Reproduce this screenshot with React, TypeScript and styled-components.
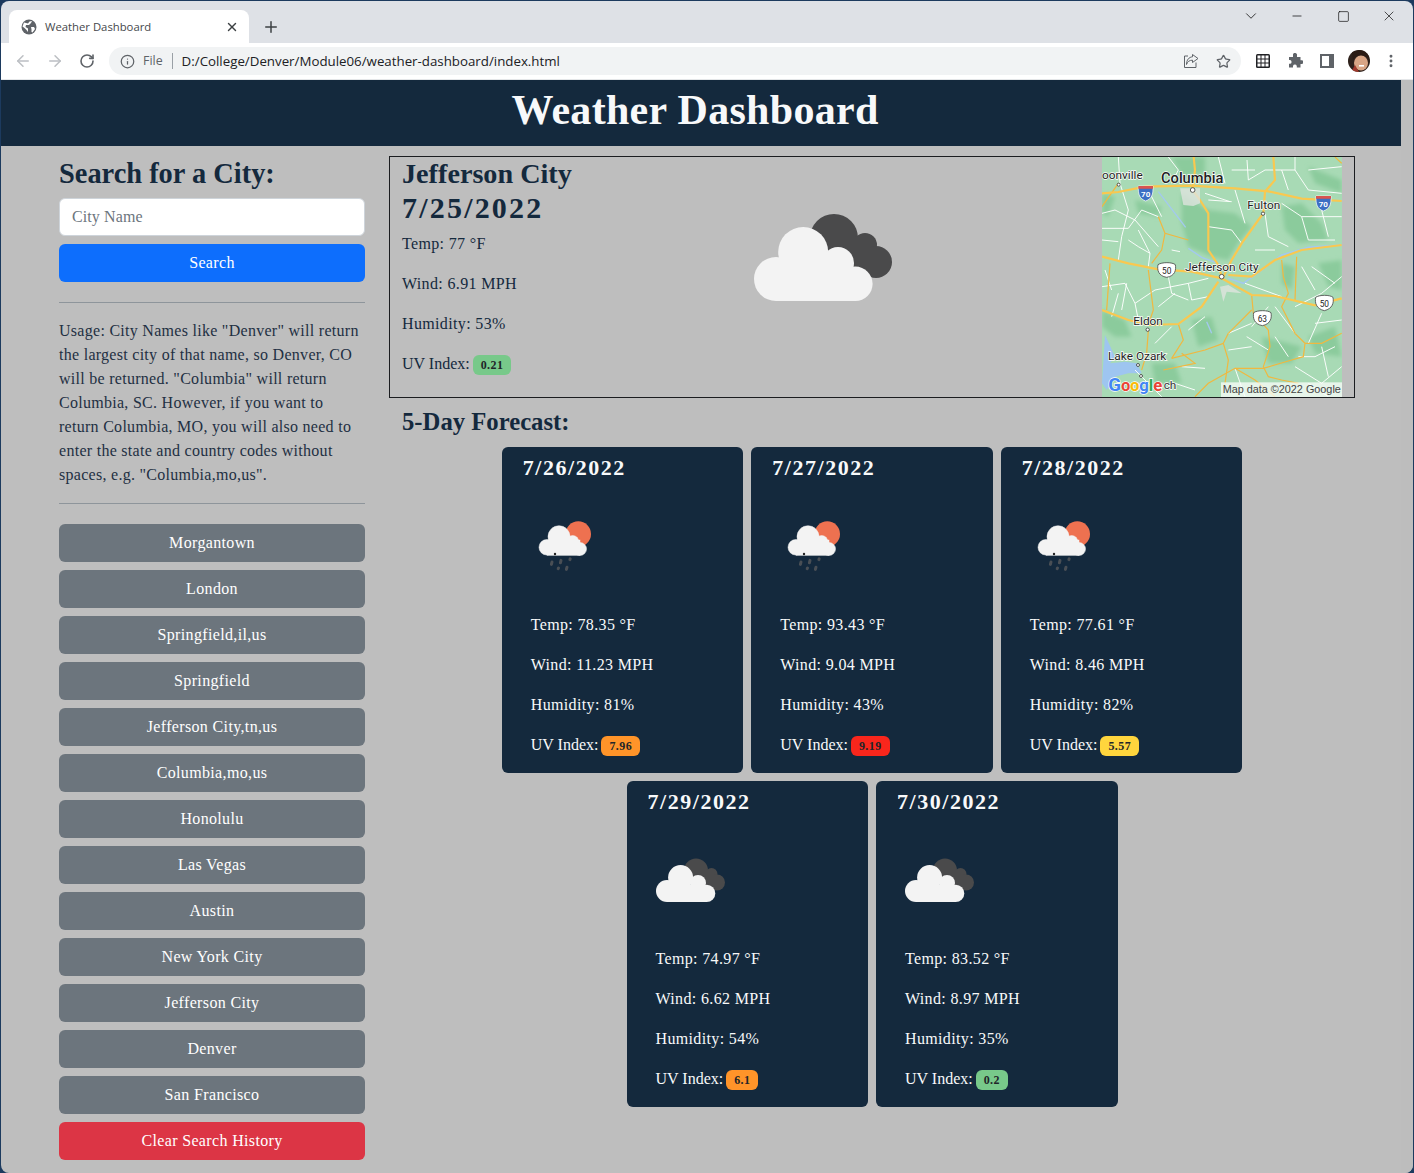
import styled, { createGlobalStyle } from "styled-components";
import { ArrowLeft, ArrowRight, ChevronDown, Info, Minus, MoreVertical, Plus, RotateCw, Square, Star, X } from "lucide-react";

const GlobalStyle = createGlobalStyle`
    html, body {
        margin: 0;
        padding: 0;
        background: #1c3a5e;
    }
    * {
        box-sizing: border-box;
    }
`

const navy = "#14293d";
const serif = "'Liberation Serif', 'Times New Roman', serif";

const Window = styled.div`
    width: 1414px;
    height: 1173px;
    padding: 1px 1px 0;
    display: flex;
    flex-direction: column;
    overflow: hidden;
`

const TabStrip = styled.div`
    height: 42px;
    flex: none;
    display: flex;
    align-items: flex-end;
    padding-left: 8px;
    background: #dee1e6;
    border-radius: 8px 8px 0 0;
`

const Tab = styled.div`
    width: 240px;
    height: 33px;
    display: flex;
    align-items: center;
    padding: 0 10px 0 12px;
    background: #fff;
    border-radius: 8px 8px 0 0;
    color: #45484c;
    font: 11.3px 'Open Sans', sans-serif;
`

const TabTitle = styled.span`
    flex: 1;
    margin-left: 8px;
`

const NewTab = styled.div`
    width: 44px;
    height: 33px;
    display: flex;
    align-items: center;
    justify-content: center;
    color: #3c4043;
`

const WindowControls = styled.div`
    margin-left: auto;
    align-self: flex-start;
    display: flex;
    color: #000;
`

const WindowButton = styled.div<{ $width: number }>`
    width: ${props => props.$width}px;
    height: 30px;
    display: flex;
    align-items: center;
    justify-content: center;
`

const Toolbar = styled.div`
    height: 37px;
    flex: none;
    display: flex;
    align-items: center;
    padding: 0 6px;
    background: #fff;
    border-bottom: 1px solid #e4e6e8;
`

const ToolButton = styled.div<{ $colour?: string }>`
    width: 32px;
    height: 32px;
    flex: none;
    display: flex;
    align-items: center;
    justify-content: center;
    color: ${props => props.$colour || "#5f6368"};
`

const Omnibox = styled.div`
    flex: 1;
    height: 28px;
    margin: 0 6px;
    display: flex;
    align-items: center;
    padding: 0 2px 0 11px;
    background: #f1f3f4;
    border-radius: 14px;
    font: 13px 'Open Sans', sans-serif;
    color: #202124;
`

const FileLabel = styled.span`
    margin-left: 8px;
    padding-right: 9px;
    border-right: 1px solid #9aa0a6;
    color: #5f6368;
    font-size: 12.4px;
    line-height: 16px;
`

const Url = styled.span`
    flex: 1;
    margin-left: 9px;
    font-size: 13.3px;
`

const Viewport = styled.div`
    flex: 1;
    min-height: 0;
    display: flex;
    background: #bebebe;
    border-radius: 0 0 8px 8px;
    overflow: hidden;
`

const Page = styled.div`
    width: 1400px;
    flex: none;
    font-family: ${serif};
    color: ${navy};
`

const Scrollbar = styled.div`
    flex: 1;
    background: #bdbdbd;
`

const Header = styled.header`
    height: 66px;
    display: flex;
    align-items: center;
    justify-content: center;
    background: ${navy};
    color: #f8f9fa;
    font-size: 42px;
    font-weight: 700;
    letter-spacing: 0.3px;
    padding-bottom: 7px;
    padding-right: 12px;
`

const Columns = styled.div`
    display: flex;
    padding: 10px 0 0 58px;
    gap: 24px;
`

const Sidebar = styled.aside`
    width: 306px;
    flex: none;
    padding-top: 1px;
`

const SideTitle = styled.h2`
    margin: 0 0 7px;
    font-size: 28.4px;
    line-height: 34px;
    font-weight: 700;
`

const CityInput = styled.input`
    width: 100%;
    height: 38px;
    display: block;
    padding: 0 12px;
    border: 1px solid #ced4da;
    border-radius: 6px;
    background: #fff;
    font-family: ${serif};
    font-size: 16px;
    letter-spacing: 0.1px;
    &::placeholder {
        color: #6c757d;
        opacity: 1;
    }
`

const Button = styled.button<{ $bg: string }>`
    width: 100%;
    height: 38px;
    display: block;
    margin-top: 8px;
    border: 0;
    border-radius: 6px;
    background: ${props => props.$bg};
    color: #fff;
    font-family: ${serif};
    font-size: 16px;
    letter-spacing: 0.35px;
`

const Rule = styled.hr<{ $before: number; $after: number }>`
    margin: ${props => props.$before}px 0 ${props => props.$after}px;
    border: 0;
    border-top: 1px solid #8e959b;
`

const Usage = styled.p`
    margin: 0;
    font-size: 16px;
    line-height: 24px;
    letter-spacing: 0.28px;
    color: #1e3043;
`

const Main = styled.main`
    width: 966px;
    flex: none;
`

const Today = styled.section`
    height: 242px;
    display: flex;
    justify-content: space-between;
    padding: 0 12px;
    border: 1px solid #1b1d20;
`

const Summary = styled.div`
    width: 172px;
`

const BigTitle = styled.h2`
    margin: 0;
    font-size: 28.2px;
    line-height: 34px;
    font-weight: 700;
    white-space: nowrap;
`

const BigDate = styled(BigTitle)`
    margin-bottom: 7px;
    font-size: 30px;
    letter-spacing: 2.2px;
`

const Stat = styled.p`
    margin: 0 0 16px;
    height: 24px;
    font-size: 16px;
    line-height: 24px;
    letter-spacing: 0.35px;
    white-space: nowrap;
`

const UvLabel = styled.span`
    letter-spacing: 0;
`

const Badge = styled.span<{ $bg: string }>`
    display: inline-block;
    height: 20px;
    margin-left: 3px;
    padding: 0 8px;
    border-radius: 6px;
    background: ${props => props.$bg};
    color: #212529;
    font: 700 12px/20px ${serif};
    letter-spacing: 0.4px;
`

const MapFrame = styled.svg`
    width: 240px;
    height: 240px;
    display: block;
`

const ForecastTitle = styled.h3`
    margin: 9px 0 11px 13px;
    font-size: 24.7px;
    line-height: 29px;
    font-weight: 700;
`

const Cards = styled.div`
    display: flex;
    flex-wrap: wrap;
    justify-content: center;
    gap: 8px;
`

const Card = styled.article`
    width: 241.5px;
    height: 326px;
    padding-top: 8px;
    border-radius: 6px;
    background: ${navy};
    color: #f8f9fa;
`

const CardDate = styled.h4`
    margin: 0 0 16px 21px;
    font-size: 22px;
    line-height: 25px;
    font-weight: 700;
    letter-spacing: 1.55px;
`

const CardIcon = styled.div`
    margin-left: 21px;
    height: 100px;
`

const CardStats = styled.div`
    margin: 17px 0 0 29px;
`

const CloudIcon = ({ size }: { size: number }) => (
    <svg width={size} height={size} viewBox="0 0 100 100">
        <g fill="#4a4a4b">
            <circle cx="48" cy="40.5" r="12" />
            <circle cx="63.5" cy="44" r="6" />
            <circle cx="69" cy="52.5" r="8" />
            <rect x="44" y="40" width="22" height="20" />
        </g>
        <g fill="#f3f3f3">
            <circle cx="32.6" cy="47.5" r="12.5" />
            <circle cx="19" cy="61" r="11" />
            <circle cx="58.7" cy="63.4" r="8.6" />
            <circle cx="50" cy="53" r="8" />
            <rect x="19" y="55" width="40" height="17" />
        </g>
    </svg>
)

const RainIcon = ({ size }: { size: number }) => (
    <svg width={size} height={size} viewBox="0 0 100 100">
        <circle cx="55.3" cy="38" r="12.7" fill="#ee7150" />
        <g fill="#f3f3f3" stroke="#f3f3f3" strokeWidth="0.5">
            <circle cx="36" cy="40.7" r="11" />
            <circle cx="23.7" cy="51.3" r="7.7" />
            <circle cx="57" cy="53" r="6.5" />
            <circle cx="49.7" cy="45.5" r="6" />
            <rect x="24" y="44" width="33" height="15.3" />
        </g>
        <circle cx="32" cy="58" r="1.2" fill="#222" />
        <g stroke="#4a4f55" strokeWidth="3" strokeLinecap="round">
            <line x1="29" y1="66" x2="28.4" y2="68.4" />
            <line x1="38" y1="64.4" x2="37.4" y2="66.8" />
            <line x1="47.2" y1="62.8" x2="46.9" y2="63.6" />
            <line x1="35.5" y1="72" x2="35.2" y2="72.6" />
            <line x1="44" y1="71.2" x2="43.4" y2="73.4" />
        </g>
    </svg>
)

// coordinates here are the 3x crop of the map tile, hence the odd viewBox
const orangeMajor = [
    "M21 130L70 126L150 110L290 107L420 115L520 124L620 146L740 153",
    "M293 120L315 150L340 190L340 300L370 345L380 380",
    "M505 190L490 210L440 280L410 330L385 380",
    "M21 320L100 340L190 358L290 365L380 385L470 435L540 438L660 466L740 445",
    "M370 395L320 470L250 522L160 525L100 510L21 480",
    "M400 375L470 380L540 330L620 300L740 285",
    "M535 21L540 90L510 125L505 190",
    "M296 21L300 60L293 120",
];

const orangeMinor = [
    "M470 435L475 490L520 540L525 590L505 650L520 680L560 690L610 700",
    "M560 330L565 380L580 430L560 470L600 550L630 580L625 620L590 630L505 655L420 655L340 700L300 740",
    "M630 580L680 580L740 550",
    "M210 250L200 300L170 340",
    "M190 200L210 250L280 270",
    "M400 550L470 480",
    "M400 550L385 580L400 630L390 700",
    "M385 580L330 600L230 625",
    "M160 540L155 610L140 660",
    "M70 100L21 170",
    "M605 320L600 450",
    "M45 340L35 480",
    "M160 360L175 480L160 525",
    "M250 522L265 570L230 625",
    "M205 660L300 640L260 610",
    "M420 655L480 690L540 740",
    "M720 21L740 40",
];

const whiteRoads = [
    "M70 21L75 100L100 180L80 260L70 330",
    "M21 235L100 235L140 180L190 200",
    "M130 240L165 310L160 350",
    "M21 410L90 400L120 460L180 420L280 400L340 385",
    "M70 430L50 500",
    "M280 400L290 450L340 440",
    "M190 470L240 430",
    "M230 300L255 305",
    "M340 150L410 155",
    "M340 230L410 240L440 280",
    "M456 30L460 90L510 60L600 60L640 120",
    "M600 21L600 60",
    "M640 60L740 50",
    "M510 190L520 260L580 290",
    "M560 160L620 200L640 270L720 270",
    "M620 200L740 200",
    "M640 120L740 130",
    "M450 400L560 440",
    "M600 470L680 430L740 380",
    "M650 350L720 400",
    "M680 490L640 580",
    "M660 520L740 510",
    "M470 520L400 550",
    "M455 560L520 600",
    "M540 470L600 550",
    "M260 650L330 655",
    "M180 580L230 530",
    "M420 655L450 740",
    "M600 650L680 700L740 650",
    "M680 590L700 680",
    "M220 21L250 60L230 100",
    "M330 130L405 155",
    "M120 660L200 740",
    "M370 21L390 100",
    "M21 190L60 180L120 210L190 290",
    "M100 270L130 290L165 310",
    "M21 270L70 275",
    "M30 360L50 420",
    "M95 400L80 480",
    "M120 460L130 510",
    "M220 380L230 430L280 450",
    "M160 120L200 200",
    "M410 60L480 60",
    "M420 120L450 220",
    "M560 60L580 120",
    "M680 180L700 260",
    "M620 350L660 420",
    "M480 300L540 300",
    "M520 470L470 530",
    "M540 560L580 620",
    "M400 600L470 590",
    "M610 620L660 620L720 590",
    "M640 700L700 740",
    "M280 540L330 500",
    "M240 700L300 720",
];

const darkPatches = [
    "M260 130L340 180L420 190L470 230L430 280L400 330L350 320L280 290L260 220Z",
    "M560 170L620 160L680 220L700 270L610 280L570 240Z",
    "M21 480L90 510L110 560L60 560L21 530Z",
    "M230 21L330 21L330 70L260 80Z",
    "M500 560L620 590L590 640L520 640Z",
    "M120 150L200 170L190 200L130 190Z",
    "M640 50L740 90L740 130L660 100Z",
    "M670 340L740 330L740 420L700 410Z",
    "M290 510L350 500L370 570L310 590Z",
    "M170 640L240 640L260 700L180 700Z",
    "M560 340L600 350L590 420L560 400Z",
    "M640 560L720 530L740 620L660 610Z",
    "M21 130L60 140L40 200L21 190Z",
];

const MapDrawing = () => (
    <MapFrame viewBox="21 21 720 720" fontFamily="Roboto, sans-serif">
        <defs>
            <filter id="soft-patch"><feGaussianBlur stdDeviation="7" /></filter>
        </defs>
        <rect x="21" y="21" width="720" height="720" fill="#a8dab5" />
        <g filter="url(#soft-patch)">
            {darkPatches.map(d => <path key={d} d={d} fill="#8bcb9c" />)}
        </g>
        <g fill="none" stroke="#a3c9ef" strokeWidth="4">
            <path d="M190 125L240 190L272 232" />
            <path d="M280 295L320 322L370 340" />
            <path d="M400 385L445 400L500 360L560 315L640 292L740 285" strokeWidth="5" />
            <path d="M335 515L350 550" />
        </g>
        <path d="M30 555L60 620L45 640L90 635L125 640L140 670L100 670L60 680L35 720L21 700Z" fill="#9ec5f0" />
        <g fill="none" stroke="#fff" strokeWidth="2.8">
            {whiteRoads.map(d => <path key={d} d={d} />)}
        </g>
        <g fill="none" stroke="#f0b840" strokeWidth="3.6">
            {orangeMinor.map(d => <path key={d} d={d} />)}
        </g>
        <g fill="none" stroke="#f9c850" strokeWidth="6.5">
            {orangeMajor.map(d => <path key={d} d={d} />)}
        </g>
        <path d="M255 115H315V160L295 168L265 165Z M375 410L385 455L395 425L440 430L400 405Z" fill="#dfe3df" opacity="0.8" />
        <g fill="#fff" stroke="#333" strokeWidth="2.4">
            <circle cx="71" cy="104" r="4.5" />
            <circle cx="293" cy="120" r="7" />
            <circle cx="504" cy="191" r="5" />
            <circle cx="380" cy="380" r="7" />
            <circle cx="158" cy="539" r="5" />
            <circle cx="129" cy="645" r="4.5" />
            <circle cx="138" cy="678" r="4.5" />
        </g>
        <g stroke="#fff" strokeWidth="4" paintOrder="stroke" fill="#222" fontSize="35.5">
            <text x="21" y="88">oonville</text>
            <text x="198" y="98" fontSize="44" fontWeight="500">Columbia</text>
            <text x="457" y="178">Fulton</text>
            <text x="270" y="363">Jefferson City</text>
            <text x="115" y="525">Eldon</text>
            <text x="39" y="630">Lake Ozark</text>
            <text x="206" y="717" fill="#333">ch</text>
        </g>
        <g>
            <path d="M130 108H174C175 135 170 146 152 153C134 146 129 135 130 108Z" fill="#3c6fc4" stroke="#fff" strokeWidth="2" />
            <path d="M130 108H174V116H130Z" fill="#d9534f" />
            <text x="152" y="141" fill="#fff" fontSize="24" fontWeight="700" textAnchor="middle">70</text>
            <path d="M663 138H708C709 165 704 176 685 183C667 176 662 165 663 138Z" fill="#3c6fc4" stroke="#fff" strokeWidth="2" />
            <path d="M663 138H708V146H663Z" fill="#d9534f" />
            <text x="685" y="171" fill="#fff" fontSize="24" fontWeight="700" textAnchor="middle">70</text>
        </g>
        <g fill="#fff" stroke="#444" strokeWidth="2.4">
            <path d="M189 344C200 336 232 336 241 344C244 360 240 378 215 382C190 378 186 360 189 344Z" />
            <path d="M662 442C673 434 705 434 714 442C717 458 713 476 688 482C663 476 659 458 662 442Z" />
            <path d="M476 488C487 480 519 480 528 488C531 504 527 522 502 527C477 522 473 504 476 488Z" />
        </g>
        <g fill="#222" fontSize="25" textAnchor="middle">
            <text x="215" y="372">50</text>
            <text x="688" y="470">50</text>
            <text x="502" y="516">63</text>
        </g>
        <g fontSize="50" fontWeight="700" stroke="#fff" strokeWidth="4" paintOrder="stroke">
            <text x="40" y="724" fill="#4285f4" fontSize="56">G</text>
            <text x="78" y="722" fill="#ea4335">o</text>
            <text x="105" y="722" fill="#fbbc05">o</text>
            <text x="133" y="722" fill="#4285f4">g</text>
            <text x="161" y="722" fill="#34a853">l</text>
            <text x="175" y="722" fill="#ea4335">e</text>
        </g>
        <rect x="378" y="697" width="363" height="44" fill="#fff" opacity="0.72" />
        <text x="383" y="729" fontFamily="'Liberation Sans', sans-serif" fontSize="32.5" fill="#444">Map data ©2022 Google</text>
    </MapFrame>
)

const Globe = () => (
    <svg width="16" height="16" viewBox="0 0 16 16">
        <circle cx="8" cy="8" r="7.5" fill="#5f6368" />
        <path d="M3 3.5L7 4.5L8.5 2.5L11 2L10 4L8 6L5 6L4.5 8L7 9.5V13L5.5 11L3.5 9L1.5 7.5Z M10 8H13L14 10L11.5 13.5L10.5 13L10.5 10.5Z" fill="#fff" />
    </svg>
)

const ShareIcon = () => (
    <svg width="16" height="16" viewBox="0 0 16 16" fill="none" stroke="#5f6368" strokeWidth="1">
        <path d="M5 3H1.5V14.5H13V9.5" />
        <path d="M9.5 1.5L15 5.5L9.5 9.5V7.2C6.5 7.2 4.5 8.5 3.5 11.5C3.5 7 6 4 9.5 3.8Z" />
    </svg>
)

const GridIcon = () => (
    <svg width="14" height="14" viewBox="0 0 14 14">
        <rect width="14" height="14" rx="1.5" fill="#202124" />
        <g fill="#fff">
            {[1.5, 5.5, 9.5].flatMap(x => [1.5, 5.5, 9.5].map(y => (
                <rect key={`${x}-${y}`} x={x} y={y} width="3" height="3" />
            )))}
        </g>
    </svg>
)

const PuzzleIcon = () => (
    <svg width="16" height="16" viewBox="0 0 16 16">
        <path d="M6 1.5A2 2 0 0 1 10 2.5V4H13.5V7.2H15A2 2 0 0 1 15 11H13.5V14.5H9.8V13A2 2 0 0 0 6 13V14.5H2V10.8H3.2A2 2 0 0 0 3.2 7H2V4H6Z" fill="#5f6368" />
    </svg>
)

const PanelIcon = () => (
    <svg width="14" height="14" viewBox="0 0 14 14">
        <rect width="14" height="14" fill="#5f6368" />
        <rect x="2" y="2" width="7" height="10" fill="#fff" />
    </svg>
)

const Avatar = () => (
    <svg width="22" height="22" viewBox="0 0 22 22">
        <defs>
            <clipPath id="avatar-clip"><circle cx="11" cy="11" r="11" /></clipPath>
        </defs>
        <g clipPath="url(#avatar-clip)">
            <rect width="22" height="22" fill="#2e211b" />
            <ellipse cx="13" cy="13" rx="7" ry="7.5" fill="#d9a585" />
            <path d="M5 10C8 4 16 3 21 9L22 3L14 -1L4 2Z" fill="#2a1b14" />
            <path d="M7 15L11 22H3Z" fill="#a0392c" />
            <rect x="11" y="15" width="5" height="1.6" fill="#fff" />
        </g>
    </svg>
)

const uvColours = {
    green: "#78c98a",
    orange: "#ff9429",
    red: "#f9261c",
    yellow: "#ffd53d",
};

const days = [
    { date: "7/26/2022", rain: true, temp: "78.35", wind: "11.23", humidity: 81, uv: "7.96", colour: uvColours.orange },
    { date: "7/27/2022", rain: true, temp: "93.43", wind: "9.04", humidity: 43, uv: "9.19", colour: uvColours.red },
    { date: "7/28/2022", rain: true, temp: "77.61", wind: "8.46", humidity: 82, uv: "5.57", colour: uvColours.yellow },
    { date: "7/29/2022", rain: false, temp: "74.97", wind: "6.62", humidity: 54, uv: "6.1", colour: uvColours.orange },
    { date: "7/30/2022", rain: false, temp: "83.52", wind: "8.97", humidity: 35, uv: "0.2", colour: uvColours.green },
];

const cities = [
    "Morgantown", "London", "Springfield,il,us", "Springfield", "Jefferson City,tn,us", "Columbia,mo,us", "Honolulu",
    "Las Vegas", "Austin", "New York City", "Jefferson City", "Denver", "San Francisco",
];

const App = () => (
    <Window>
        <GlobalStyle />
        <TabStrip>
            <Tab>
                <Globe />
                <TabTitle>Weather Dashboard</TabTitle>
                <X size={14} strokeWidth={2.4} color="#3c4043" />
            </Tab>
            <NewTab><Plus size={18} strokeWidth={2} /></NewTab>
            <WindowControls>
                <WindowButton $width={46}><ChevronDown size={18} strokeWidth={1} /></WindowButton>
                <WindowButton $width={46}><Minus size={14} strokeWidth={1.2} /></WindowButton>
                <WindowButton $width={46}><Square size={13} strokeWidth={1.2} /></WindowButton>
                <WindowButton $width={46}><X size={16} strokeWidth={1} /></WindowButton>
                <WindowButton $width={1} />
            </WindowControls>
        </TabStrip>
        <Toolbar>
            <ToolButton $colour="#bcbfc3"><ArrowLeft size={18} /></ToolButton>
            <ToolButton $colour="#bcbfc3"><ArrowRight size={18} /></ToolButton>
            <ToolButton><RotateCw size={16} strokeWidth={2.4} /></ToolButton>
            <Omnibox>
                <Info size={15} color="#5f6368" />
                <FileLabel>File</FileLabel>
                <Url>D:/College/Denver/Module06/weather-dashboard/index.html</Url>
                <ToolButton><ShareIcon /></ToolButton>
                <ToolButton><Star size={15} strokeWidth={2} /></ToolButton>
            </Omnibox>
            <ToolButton><GridIcon /></ToolButton>
            <ToolButton><PuzzleIcon /></ToolButton>
            <ToolButton><PanelIcon /></ToolButton>
            <ToolButton><Avatar /></ToolButton>
            <ToolButton><MoreVertical size={16} strokeWidth={2.4} /></ToolButton>
        </Toolbar>
        <Viewport>
            <Page>
                <Header>Weather Dashboard</Header>
                <Columns>
                    <Sidebar>
                        <SideTitle>Search for a City:</SideTitle>
                        <CityInput placeholder="City Name" />
                        <Button $bg="#0d6efd">Search</Button>
                        <Rule $before={20} $after={16} />
                        <Usage>
                            Usage: City Names like "Denver" will return the largest city of that name, so Denver, CO will be returned. "Columbia" will return Columbia, SC. However, if you want to return Columbia, MO, you will also need to enter the state and country codes without spaces, e.g. "Columbia,mo,us".
                        </Usage>
                        <Rule $before={16} $after={20} />
                        {cities.map(city => <Button key={city} $bg="#6c757d">{city}</Button>)}
                        <Button $bg="#dc3545">Clear Search History</Button>
                    </Sidebar>
                    <Main>
                        <Today>
                            <Summary>
                                <BigTitle>Jefferson City</BigTitle>
                                <BigDate>7/25/2022</BigDate>
                                <Stat>Temp: 77 °F</Stat>
                                <Stat>Wind: 6.91 MPH</Stat>
                                <Stat>Humidity: 53%</Stat>
                                <Stat><UvLabel>UV Index:</UvLabel><Badge $bg={uvColours.green}>0.21</Badge></Stat>
                            </Summary>
                            <CloudIcon size={200} />
                            <MapDrawing />
                        </Today>
                        <ForecastTitle>5-Day Forecast:</ForecastTitle>
                        <Cards>
                            {days.map(day => (
                                <Card key={day.date}>
                                    <CardDate>{day.date}</CardDate>
                                    <CardIcon>
                                        {day.rain ? <RainIcon size={100} /> : <CloudIcon size={100} />}
                                    </CardIcon>
                                    <CardStats>
                                        <Stat>Temp: {day.temp} °F</Stat>
                                        <Stat>Wind: {day.wind} MPH</Stat>
                                        <Stat>Humidity: {day.humidity}%</Stat>
                                        <Stat><UvLabel>UV Index:</UvLabel><Badge $bg={day.colour}>{day.uv}</Badge></Stat>
                                    </CardStats>
                                </Card>
                            ))}
                        </Cards>
                    </Main>
                </Columns>
            </Page>
            <Scrollbar />
        </Viewport>
    </Window>
)

export default App
